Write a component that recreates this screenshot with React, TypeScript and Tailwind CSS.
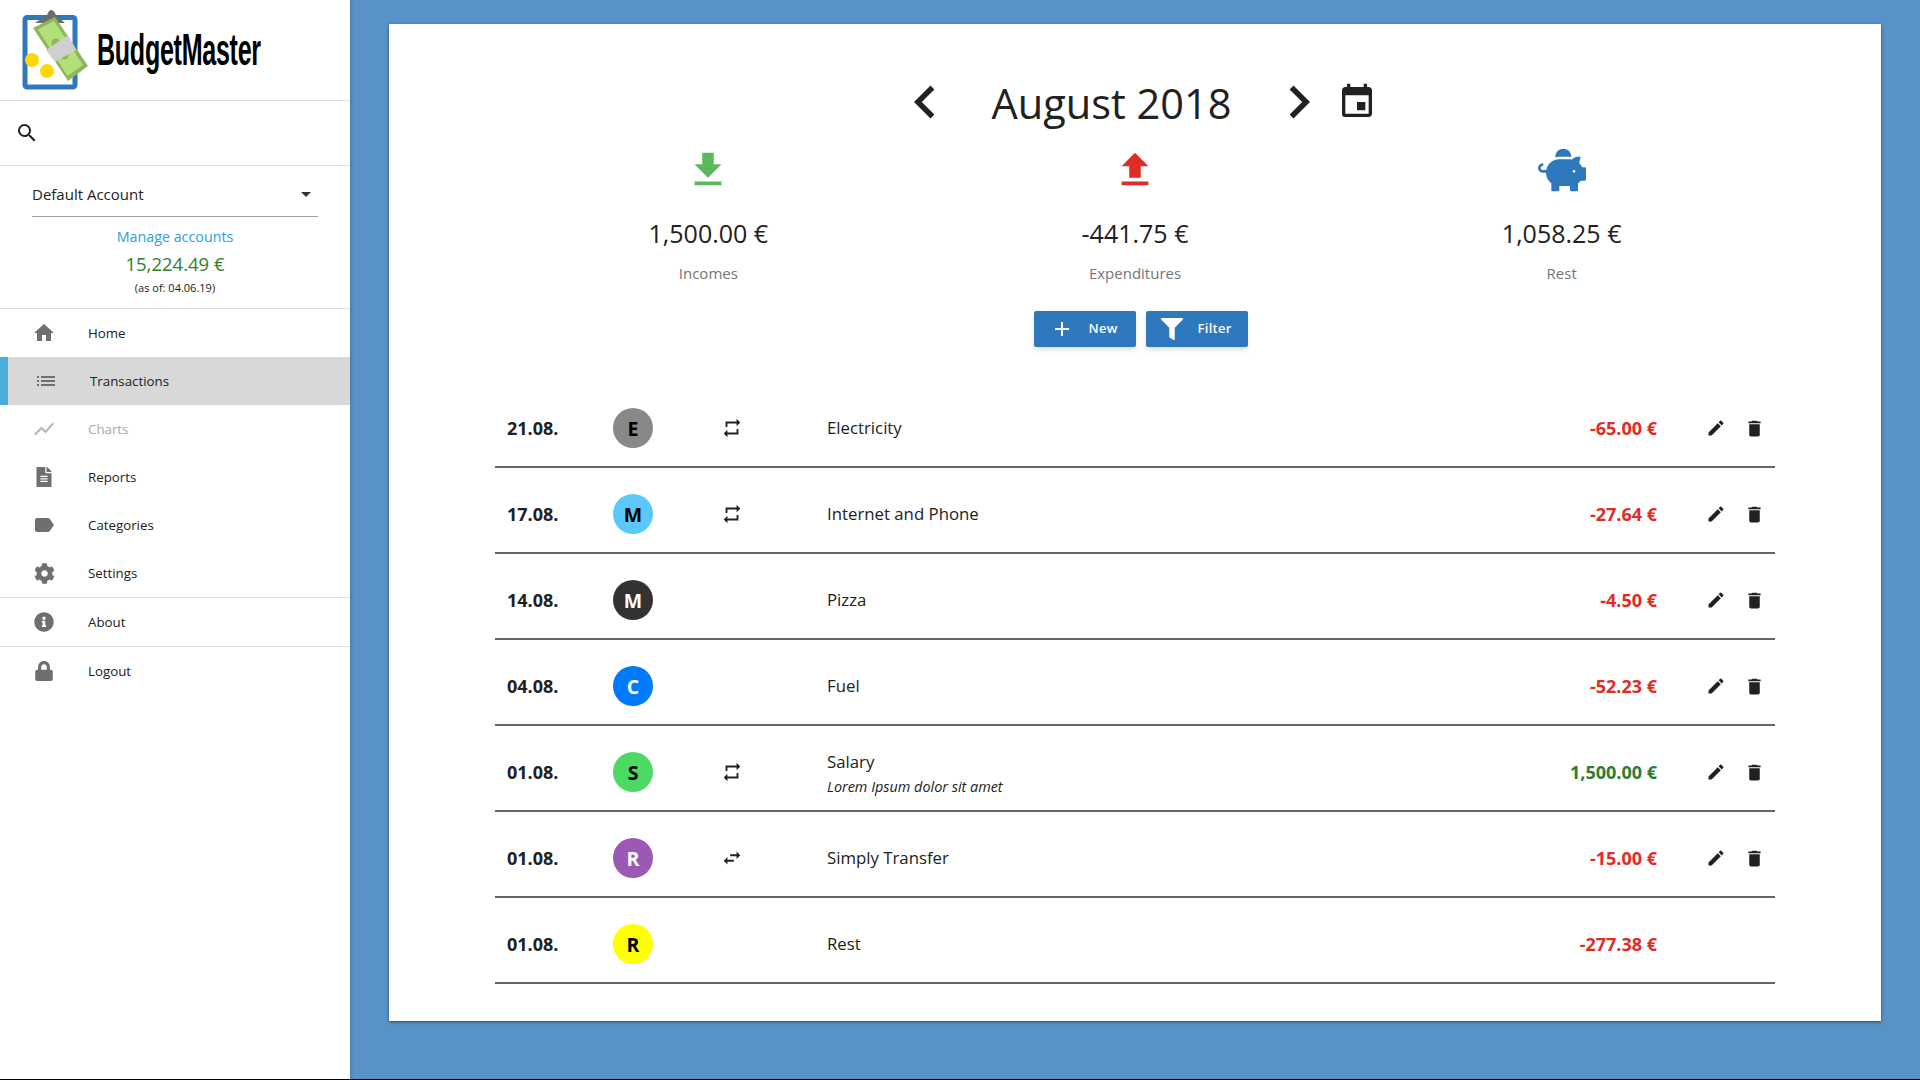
import { FaCog, FaFileAlt, FaFilter, FaInfoCircle, FaLock, FaPiggyBank } from "react-icons/fa";
import {
  MdAdd,
  MdChevronLeft,
  MdChevronRight,
  MdDelete,
  MdEdit,
  MdEvent,
  MdFileDownload,
  MdFileUpload,
  MdHome,
  MdLabel,
  MdList,
  MdRepeat,
  MdSearch,
  MdShowChart,
  MdSwapHoriz,
} from "react-icons/md";

const navTop = [
  { label: "Home", icon: <MdHome size={24} /> },
  { label: "Transactions", icon: <MdList size={24} />, active: true },
  { label: "Charts", icon: <MdShowChart size={24} />, disabled: true },
  { label: "Reports", icon: <FaFileAlt size={20} /> },
  { label: "Categories", icon: <MdLabel size={24} /> },
  { label: "Settings", icon: <FaCog size={21} /> },
];

const rows = [
  { date: "21.08.", letter: "E", circle: "bg-[#888888]", dark: true, repeat: "repeat", name: "Electricity", amount: "-65.00 €", actions: true },
  { date: "17.08.", letter: "M", circle: "bg-[#5ac8fa]", dark: true, repeat: "repeat", name: "Internet and Phone", amount: "-27.64 €", actions: true },
  { date: "14.08.", letter: "M", circle: "bg-[#333333]", dark: false, repeat: "", name: "Pizza", amount: "-4.50 €", actions: true },
  { date: "04.08.", letter: "C", circle: "bg-[#007aff]", dark: false, repeat: "", name: "Fuel", amount: "-52.23 €", actions: true },
  { date: "01.08.", letter: "S", circle: "bg-[#4cd964]", dark: true, repeat: "repeat", name: "Salary", note: "Lorem Ipsum dolor sit amet", amount: "1,500.00 €", income: true, actions: true },
  { date: "01.08.", letter: "R", circle: "bg-[#9b59b6]", dark: false, repeat: "transfer", name: "Simply Transfer", amount: "-15.00 €", actions: true },
  { date: "01.08.", letter: "R", circle: "bg-[#ffff00]", dark: true, repeat: "", name: "Rest", amount: "-277.38 €", actions: false },
];

function Logo() {
  return (
    <svg width="68" height="82" viewBox="22 9 68 82" className="shrink-0">
      <rect x="25" y="17.5" width="50" height="69.5" rx="2" fill="#fff" stroke="#2e78bd" strokeWidth="5" />
      <path d="M35 23 L47 15 Q49 10 51 10 Q54 10 56 15 L65 23 Z" fill="#6d6d6d" />
      <polygon points="33,28 55,17 88,66 68,81" fill="#8fb55e" />
      <polygon points="38,29.5 54,21 83,65 67.5,76" fill="#b4e07a" />
      <ellipse cx="60" cy="49" rx="6" ry="12" transform="rotate(-35 60 49)" fill="#8fb55e" />
      <polygon points="46,50 68,35 76,50 55,62" fill="#cfcfcf" />
      <circle cx="32" cy="60" r="7" fill="#ffd60a" />
      <circle cx="47" cy="71" r="7" fill="#ffd60a" />
    </svg>
  );
}

function NavItem({ label, icon, active, disabled }: { label: string; icon: React.ReactNode; active?: boolean; disabled?: boolean }) {
  return (
    <div className={`flex h-12 items-center text-[13.3px] font-medium ${active ? "border-l-[8px] border-[#4aaed8] bg-[#d8d8d8] text-[#212121]" : "text-[#212121]"}`}>
      <div className={`flex w-[44px] justify-center ${active ? "ml-[16px]" : "ml-[22px]"} ${disabled ? "text-[#b4b4b4]" : "text-[#6f6f6f]"}`}>{icon}</div>
      <span className={`ml-[22px] pt-[1px] ${disabled ? "text-[#a8a8a8]" : ""}`}>{label}</span>
    </div>
  );
}

function Stat({ icon, value, label }: { icon: React.ReactNode; value: string; label: string }) {
  return (
    <div className="flex flex-col items-center">
      <div className="flex h-[50px] items-center">{icon}</div>
      <div className="mt-[20px] text-[25px] leading-[36px] text-[#212121]">{value}</div>
      <div className="mt-[10px] text-[15px] leading-[24px] text-[#757575]">{label}</div>
    </div>
  );
}

export default function App() {
  return (
    <div className="flex h-screen border-b border-black bg-[#5892c8] font-['Open_Sans','Noto_Sans',sans-serif] text-[#212121]">
      {/* Sidebar */}
      <aside className="relative flex w-[350px] shrink-0 flex-col bg-white shadow-[1px_0_3px_rgba(0,0,0,0.2)]">
        <div className="flex h-[101px] items-center border-b border-[#e0e0e0] pl-[22px]">
          <Logo />
          <span className="ml-[7px] origin-left scale-x-[0.57] font-['Liberation_Sans',sans-serif] text-[44px] font-bold tracking-[-0.5px] text-black">BudgetMaster</span>
        </div>
        <div className="flex h-[65px] items-center border-b border-[#e0e0e0] pl-[15px]">
          <MdSearch size={24} className="text-[#212121]" />
        </div>
        <div className="flex h-[143px] flex-col border-b border-[#e0e0e0]">
          <div className="mx-[32px] mt-[6px] flex h-[45px] items-center justify-between border-b border-[#9e9e9e] pr-[2px] text-[15px] text-[#212121]">
            <span>Default Account</span>
            <span className="mr-[5px] border-x-[5px] border-t-[5px] border-x-transparent border-t-[#333333]" />
          </div>
          <a className="mt-[9px] text-center text-[14.3px] leading-[22px] text-[#2aa0e8]" href="#">Manage accounts</a>
          <div className="mt-[3px] text-center text-[18.5px] leading-[26px] text-[#2e7d32]">15,224.49 €</div>
          <div className="mt-[3px] text-center text-[11px] leading-[16px] text-[#212121]">(as of: 04.06.19)</div>
        </div>
        <nav className="flex flex-col">
          {navTop.map((item) => (
            <NavItem key={item.label} {...item} />
          ))}
          <div className="border-t border-[#e0e0e0]">
            <NavItem label="About" icon={<FaInfoCircle size={20} />} />
          </div>
          <div className="border-t border-[#e0e0e0]">
            <NavItem label="Logout" icon={<FaLock size={20} />} />
          </div>
        </nav>
      </aside>

      {/* Main */}
      <main className="flex-1 pl-[39px] pr-[39px] pt-[24px]">
        <div className="h-[997px] bg-white px-[106px] shadow-[0_1px_3px_rgba(0,0,0,0.5)]">
          <div className="flex h-[128px] items-center justify-center pr-[2px] pt-[30px]">
            <MdChevronLeft size={66} className="mt-[-2px] text-[#212121]" />
            <h1 className="mx-[23px] w-[262px] text-center text-[41.5px] text-[#212121]">August 2018</h1>
            <MdChevronRight size={66} className="mt-[-2px] text-[#212121]" />
            <MdEvent size={40} className="ml-[5px] mt-[-2px] text-[#212121]" />
          </div>

          <div className="mt-[-7px] grid grid-cols-3">
            <Stat icon={<MdFileDownload size={46} className="text-[#5cb85c]" />} value="1,500.00 €" label="Incomes" />
            <Stat icon={<MdFileUpload size={46} className="text-[#e02b27]" />} value="-441.75 €" label="Expenditures" />
            <Stat icon={<FaPiggyBank size={48} className="text-[#2e78bd]" />} value="1,058.25 €" label="Rest" />
          </div>

          <div className="ml-[11px] mt-[26px] flex justify-center gap-[10px]">
            <button className="flex h-[36px] w-[102px] items-center rounded-[2px] bg-[#2e78bd] pl-[16px] text-[13px] font-semibold tracking-[0.3px] text-white shadow-md">
              <MdAdd size={24} />
              <span className="ml-[15px]">New</span>
            </button>
            <button className="flex h-[36px] w-[102px] items-center rounded-[2px] bg-[#2e78bd] pl-[15px] text-[13px] font-semibold tracking-[0.3px] text-white shadow-md">
              <FaFilter size={22} />
              <span className="ml-[15px]">Filter</span>
            </button>
          </div>

          <div className="mt-[35px]">
            {rows.map((r, i) => (
              <div key={i} className="flex h-[86px] items-center border-b-2 border-[#666666] pt-[8px] text-[16.8px]">
                <div className="w-[118px] pl-[12px] text-[18px] font-bold text-[#212121]">{r.date}</div>
                <div className={`flex h-[40px] w-[40px] items-center justify-center rounded-full pt-[2px] text-[19.5px] font-bold ${r.circle} ${r.dark ? "text-black" : "text-white"}`}>{r.letter}</div>
                <div className="flex w-[174px] justify-center pr-[17px]">
                  {r.repeat === "repeat" && <MdRepeat size={22} />}
                  {r.repeat === "transfer" && <MdSwapHoriz size={22} />}
                </div>
                <div className={`flex-1 ${r.note ? "pt-[3px]" : ""}`}>
                  <div className="leading-[24px]">{r.name}</div>
                  {r.note && <div className="mt-[2px] text-[14.4px] italic leading-[22px]">{r.note}</div>}
                </div>
                <div className={`w-[201px] text-right text-[18px] font-bold ${r.income ? "text-[#2e7d32]" : "text-[#e02b27]"}`}>{r.amount}</div>
                <div className="flex w-[118px] items-center pl-[49px]">
                  {r.actions && (
                    <>
                      <MdEdit size={20} />
                      <MdDelete size={21} className="ml-[18px]" />
                    </>
                  )}
                </div>
              </div>
            ))}
          </div>
        </div>
      </main>
    </div>
  );
}
